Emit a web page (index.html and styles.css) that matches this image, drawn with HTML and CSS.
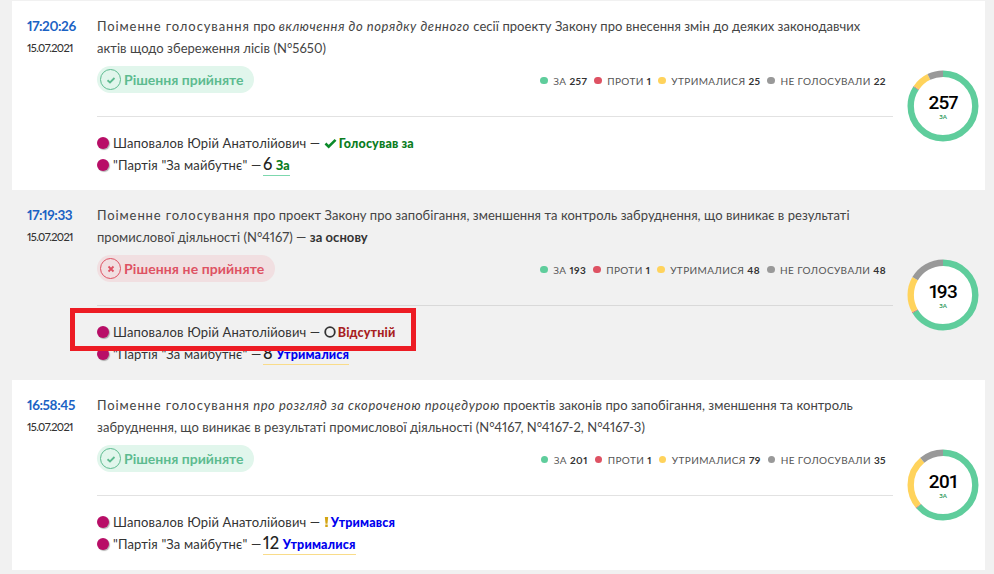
FILE: index.html
```html
<!DOCTYPE html>
<html lang="uk">
<head>
<meta charset="utf-8">
<title>Голосування</title>
<link rel="stylesheet" href="styles.css">
</head>
<body>
<main class="list">
  <article class="vote">
    <div class="when"><div class="time">17:20:26</div><div class="date">15.07.2021</div></div>
    <div class="body">
      <p class="title"><span class="lead">Поіменне голосування</span> про <em>включення до порядку денного</em> сесії проекту Закону про внесення змін до деяких законодавчих актів щодо збереження лісів (N°5650)</p>
      <div class="summary">
        <div class="badge ok"><span class="badge-icon"><svg viewBox="0 0 10 10" width="10" height="10"><path d="M1.5 5.2 4 7.4 8.5 3" fill="none" stroke="currentColor" stroke-width="1.8"/></svg></span>Рішення прийняте</div>
        <ul class="legend">
          <li><i class="dot green"></i>За <b>257</b></li>
          <li><i class="dot red"></i>Проти <b>1</b></li>
          <li><i class="dot yellow"></i>Утрималися <b>25</b></li>
          <li><i class="dot gray"></i>Не голосували <b>22</b></li>
        </ul>
      </div>
      <div class="detail">
        <div class="line"><i class="party"></i>Шаповалов Юрій Анатолійович — <svg class="vicon" viewBox="0 0 14 12" width="13" height="11"><path d="M1.5 6 5 9.5 12.5 2" fill="none" stroke="#0b8a2a" stroke-width="2.8"/></svg> <b class="for">Голосував за</b></div>
        <div class="line"><i class="party"></i>"Партія "За майбутнє" — <span class="tally u-green"><span class="num">6</span> <b class="for">За</b></span></div>
      </div>
    </div>
    <div class="ring">
      <svg viewBox="0 0 72 72" width="72" height="72">
        <circle cx="36" cy="36" r="35" fill="#fff"/>
        <g fill="none" stroke-width="6.4" transform="rotate(-90 36 36)">
          <circle cx="36" cy="36" r="32.3" pathLength="305" stroke="#5fcd9c" stroke-dasharray="257 305"/>
          <circle cx="36" cy="36" r="32.3" pathLength="305" stroke="#de5263" stroke-dasharray="1 305" stroke-dashoffset="-257"/>
          <circle cx="36" cy="36" r="32.3" pathLength="305" stroke="#ffd35c" stroke-dasharray="25 305" stroke-dashoffset="-258"/>
          <circle cx="36" cy="36" r="32.3" pathLength="305" stroke="#999" stroke-dasharray="22 305" stroke-dashoffset="-283"/>
        </g>
      </svg>
      <div class="ring-text"><span class="ring-num">257</span><span class="ring-label">ЗА</span></div>
    </div>
  </article>

  <article class="vote alt">
    <div class="when"><div class="time">17:19:33</div><div class="date">15.07.2021</div></div>
    <div class="body">
      <p class="title"><span class="lead">Поіменне голосування</span> про проект Закону про запобігання, зменшення та контроль забруднення, що виникає в результаті промислової діяльності (N°4167) — <b>за основу</b></p>
      <div class="summary">
        <div class="badge no"><span class="badge-icon"><svg viewBox="0 0 10 10" width="10" height="10"><path d="M2.5 2.5 7.5 7.5M7.5 2.5 2.5 7.5" fill="none" stroke="currentColor" stroke-width="1.8"/></svg></span>Рішення не прийняте</div>
        <ul class="legend">
          <li><i class="dot green"></i>За <b>193</b></li>
          <li><i class="dot red"></i>Проти <b>1</b></li>
          <li><i class="dot yellow"></i>Утрималися <b>48</b></li>
          <li><i class="dot gray"></i>Не голосували <b>48</b></li>
        </ul>
      </div>
      <div class="detail">
        <div class="line"><i class="party"></i>Шаповалов Юрій Анатолійович — <svg class="vicon" viewBox="0 0 12 12" width="12" height="12"><circle cx="6" cy="6" r="4.8" fill="none" stroke="#333" stroke-width="1.8"/></svg> <b class="absent">Відсутній</b></div>
        <div class="line"><i class="party"></i>"Партія "За майбутнє" — <span class="tally u-yellow"><span class="num">8</span> <b class="abstain">Утрималися</b></span></div>
      </div>
    </div>
    <div class="ring">
      <svg viewBox="0 0 72 72" width="72" height="72">
        <circle cx="36" cy="36" r="35" fill="#fff"/>
        <g fill="none" stroke-width="6.4" transform="rotate(-90 36 36)">
          <circle cx="36" cy="36" r="32.3" pathLength="290" stroke="#5fcd9c" stroke-dasharray="193 290"/>
          <circle cx="36" cy="36" r="32.3" pathLength="290" stroke="#de5263" stroke-dasharray="1 290" stroke-dashoffset="-193"/>
          <circle cx="36" cy="36" r="32.3" pathLength="290" stroke="#ffd35c" stroke-dasharray="48 290" stroke-dashoffset="-194"/>
          <circle cx="36" cy="36" r="32.3" pathLength="290" stroke="#999" stroke-dasharray="48 290" stroke-dashoffset="-242"/>
        </g>
      </svg>
      <div class="ring-text"><span class="ring-num">193</span><span class="ring-label">ЗА</span></div>
    </div>
    <div class="highlight"></div>
  </article>

  <article class="vote">
    <div class="when"><div class="time">16:58:45</div><div class="date">15.07.2021</div></div>
    <div class="body">
      <p class="title"><span class="lead">Поіменне голосування</span> <em>про розгляд за скороченою процедурою</em> проектів законів про запобігання, зменшення та контроль забруднення, що виникає в результаті промислової діяльності (N°4167, N°4167-2, N°4167-3)</p>
      <div class="summary">
        <div class="badge ok"><span class="badge-icon"><svg viewBox="0 0 10 10" width="10" height="10"><path d="M1.5 5.2 4 7.4 8.5 3" fill="none" stroke="currentColor" stroke-width="1.8"/></svg></span>Рішення прийняте</div>
        <ul class="legend">
          <li><i class="dot green"></i>За <b>201</b></li>
          <li><i class="dot red"></i>Проти <b>1</b></li>
          <li><i class="dot yellow"></i>Утрималися <b>79</b></li>
          <li><i class="dot gray"></i>Не голосували <b>35</b></li>
        </ul>
      </div>
      <div class="detail">
        <div class="line"><i class="party"></i>Шаповалов Юрій Анатолійович — <svg class="vicon" viewBox="0 0 6 12" width="5" height="12"><path d="M1 0h4L4.2 8H1.8zM1.5 9h3v3h-3z" fill="#d4a514"/></svg> <b class="abstain">Утримався</b></div>
        <div class="line"><i class="party"></i>"Партія "За майбутнє" — <span class="tally u-yellow"><span class="num">12</span> <b class="abstain">Утрималися</b></span></div>
      </div>
    </div>
    <div class="ring">
      <svg viewBox="0 0 72 72" width="72" height="72">
        <circle cx="36" cy="36" r="35" fill="#fff"/>
        <g fill="none" stroke-width="6.4" transform="rotate(-90 36 36)">
          <circle cx="36" cy="36" r="32.3" pathLength="316" stroke="#5fcd9c" stroke-dasharray="201 316"/>
          <circle cx="36" cy="36" r="32.3" pathLength="316" stroke="#de5263" stroke-dasharray="1 316" stroke-dashoffset="-201"/>
          <circle cx="36" cy="36" r="32.3" pathLength="316" stroke="#ffd35c" stroke-dasharray="79 316" stroke-dashoffset="-202"/>
          <circle cx="36" cy="36" r="32.3" pathLength="316" stroke="#999" stroke-dasharray="35 316" stroke-dashoffset="-281"/>
        </g>
      </svg>
      <div class="ring-text"><span class="ring-num">201</span><span class="ring-label">ЗА</span></div>
    </div>
  </article>
</main>
</body>
</html>
```
FILE: styles.css
```css
* { box-sizing: border-box; }
html, body { margin: 0; height: 574px; overflow: hidden; }
body {
  background: #f1f1f1;
  font-family: Lato, "Noto Sans", sans-serif;
  font-variant-numeric: proportional-nums;
  color: #333;
  padding: 1px 9px 0 12px;
}
.list { background: #fff; }
.vote {
  position: relative;
  display: flex;
  height: 190px;
  padding: 14px 7px 0 15px;
  background: #fff;
}
.vote:first-child { height: 189px; }
.vote.alt { background: #f1f1f1; }
.when { width: 70px; flex: none; }
.time { font-size: 13.5px; font-weight: 700; line-height: 22px; color: #1b62c4; letter-spacing: -0.4px; }
.date { font-size: 11px; font-weight: 500; line-height: 22px; color: #333; letter-spacing: -0.6px; }
.body { width: 796px; flex: none; }
.title {
  margin: 0;
  padding-right: 10px;
  font-size: 13px;
  line-height: 22px;
  height: 44px;
  letter-spacing: 0.05px;
  color: #444;
}
.title em { letter-spacing: 0.55px; }
.lead { letter-spacing: 0.9px; }
.title b { color: #333; }
.summary {
  display: flex;
  justify-content: space-between;
  align-items: center;
  margin-top: 7px;
  height: 27px;
  padding-right: 7px;
}
.badge {
  display: flex;
  align-items: center;
  height: 27px;
  border-radius: 14px;
  padding: 0 10px 0 3px;
  font-size: 14px;
  font-weight: 700;
}
.badge-icon {
  display: flex;
  align-items: center;
  justify-content: center;
  width: 21px;
  height: 21px;
  margin-right: 3px;
  border: 1px solid currentColor;
  border-radius: 50%;
}
.badge.ok { background: #e1f6ec; color: #5dbb90; }
.badge.no { background: #f1dfe1; color: #de5263; padding-right: 10.5px; letter-spacing: 0.1px; }
.legend {
  display: flex;
  gap: 7px;
  margin: 0;
  padding: 2px 0 0;
  list-style: none;
  font-size: 10px;
  letter-spacing: 0.4px;
  text-transform: uppercase;
  color: #555;
}
.legend li { display: flex; align-items: center; white-space: pre; }
.legend b { color: #333; }
.dot { width: 7.5px; height: 7.5px; border-radius: 50%; margin-right: 5.5px; }
.green { background: #5fcd9c; }
.red { background: #de5263; }
.yellow { background: #ffd35c; }
.gray { background: #999; }
.detail {
  margin-top: 23px;
  padding-top: 15px;
  border-top: 1px solid #e2e2e2;
}
.alt .detail { border-top-color: #d9d9d9; }
.line {
  display: flex;
  align-items: center;
  height: 22px;
  font-size: 13px;
  letter-spacing: 0.15px;
  white-space: pre;
  color: #333;
}
.party {
  width: 12px;
  height: 12px;
  margin-right: 4px;
  border-radius: 50%;
  background: #b80e67;
  box-shadow: 1px 1px 1px rgba(0,0,0,.3);
}
.vicon { margin: 0 2px 0 0; }
.line b { font-size: 12.5px; font-weight: 900; }
.for { color: #0b7d1e; }
.absent { color: #a81e22; }
.abstain { color: #0000ee; }
.tally { display: inline-block; margin-left: -2px; line-height: 19px; }
.num { font-size: 16.5px; font-weight: 500; color: #222; }
.u-green { border-bottom: 1px solid #7dd8ae; }
.u-yellow { border-bottom: 1px solid #f9dc8a; }
.ring { position: relative; flex: none; width: 72px; height: 72px; margin-top: 55px; margin-left: 14px; }
.ring svg { display: block; }
.ring-text {
  position: absolute;
  inset: 0;
  padding-top: 1px;
  display: flex;
  flex-direction: column;
  align-items: center;
  justify-content: center;
  color: #000;
}
.ring-num { font-family: Roboto, sans-serif; font-size: 19px; font-weight: 500; line-height: 20px; letter-spacing: -0.8px; }
.ring-label { font-size: 6px; font-weight: 700; color: #2f9a5c; line-height: 8px; }
.highlight {
  position: absolute;
  left: 58px;
  top: 118px;
  width: 346px;
  height: 43px;
  border: 5px solid #ed1c24;
}
```
